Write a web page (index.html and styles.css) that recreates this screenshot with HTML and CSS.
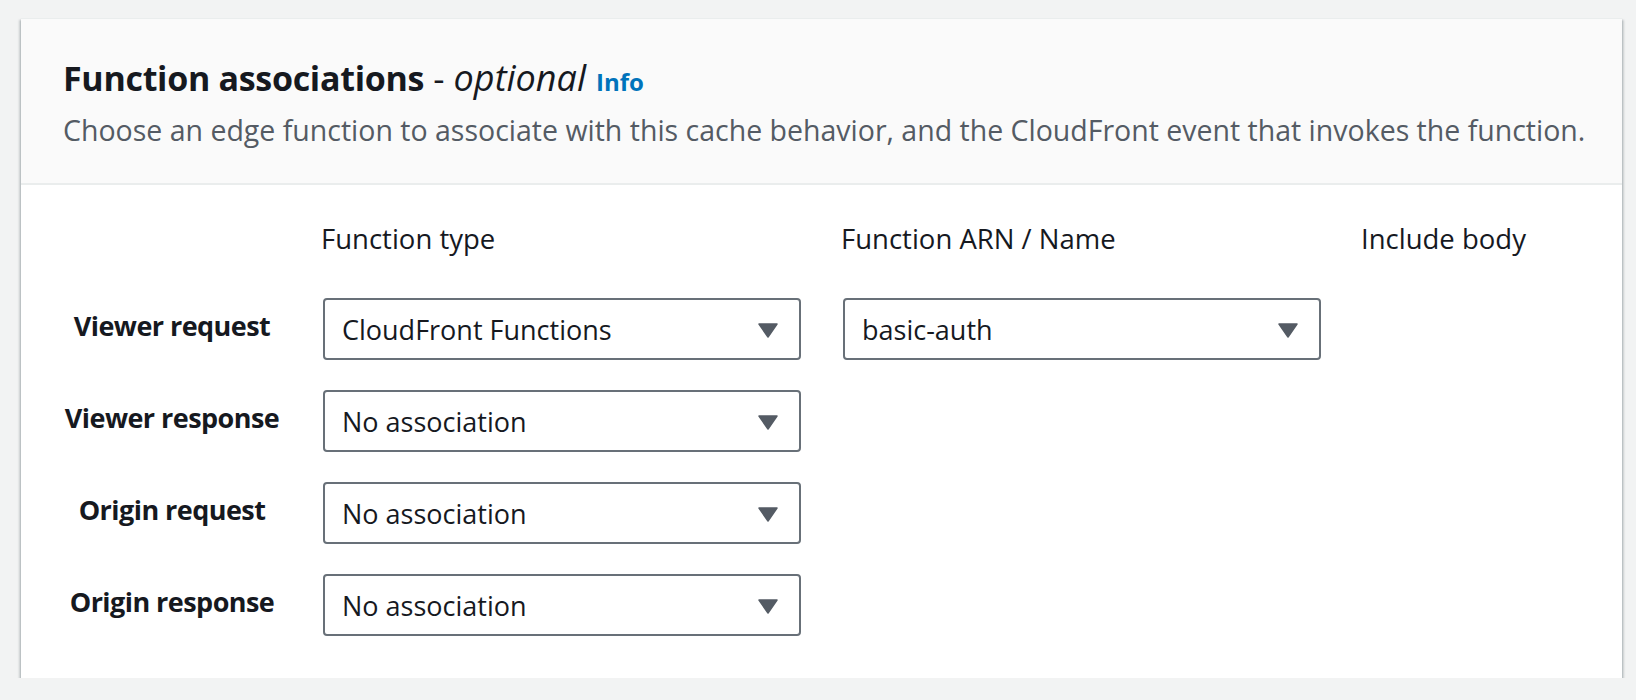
FILE: index.html
```html
<!DOCTYPE html>
<html lang="en">
<head>
<meta charset="utf-8">
<title>Function associations</title>
<link rel="stylesheet" href="styles.css">
</head>
<body>
<div class="page">
  <section class="card">
    <header class="card-header">
      <h2 class="title"><span class="title-main">Function associations</span><span class="title-opt"> - <i>optional</i></span><a class="info" href="#">Info</a></h2>
      <p class="desc">Choose an edge function to associate with this cache behavior, and the CloudFront event that invokes the function.</p>
    </header>
    <div class="card-body">
      <div class="grid">
        <div class="corner"></div>
        <div class="colhead">Function type</div>
        <div class="colhead">Function ARN / Name</div>
        <div class="colhead">Include body</div>

        <div class="rowlabel">Viewer request</div>
        <div class="select"><span>CloudFront Functions</span><svg class="caret" width="20" height="15" viewBox="0 0 20 15"><polygon points="1,1 19,1 10,14" fill="#545b64" stroke="#545b64" stroke-width="1.5" stroke-linejoin="round"/></svg></div>
        <div class="select"><span>basic-auth</span><svg class="caret" width="20" height="15" viewBox="0 0 20 15"><polygon points="1,1 19,1 10,14" fill="#545b64" stroke="#545b64" stroke-width="1.5" stroke-linejoin="round"/></svg></div>
        <div class="empty"></div>

        <div class="rowlabel">Viewer response</div>
        <div class="select"><span>No association</span><svg class="caret" width="20" height="15" viewBox="0 0 20 15"><polygon points="1,1 19,1 10,14" fill="#545b64" stroke="#545b64" stroke-width="1.5" stroke-linejoin="round"/></svg></div>
        <div class="empty"></div>
        <div class="empty"></div>

        <div class="rowlabel">Origin request</div>
        <div class="select"><span>No association</span><svg class="caret" width="20" height="15" viewBox="0 0 20 15"><polygon points="1,1 19,1 10,14" fill="#545b64" stroke="#545b64" stroke-width="1.5" stroke-linejoin="round"/></svg></div>
        <div class="empty"></div>
        <div class="empty"></div>

        <div class="rowlabel">Origin response</div>
        <div class="select"><span>No association</span><svg class="caret" width="20" height="15" viewBox="0 0 20 15"><polygon points="1,1 19,1 10,14" fill="#545b64" stroke="#545b64" stroke-width="1.5" stroke-linejoin="round"/></svg></div>
        <div class="empty"></div>
        <div class="empty"></div>
      </div>
    </div>
  </section>
</div>
</body>
</html>
```
FILE: styles.css
```css
* { box-sizing: border-box; }

html, body {
  margin: 0;
  padding: 0;
  background: #f2f3f3;
  font-family: "Open Sans", "Noto Sans", sans-serif;
  color: #16191f;
}

.page {
  padding: 18px 14px 0 21px;
}

.card {
  width: 1601px;
  height: 660px;
  background: #ffffff;
  box-shadow: 0 2px 2px 0 rgba(0, 28, 36, 0.3),
              2px 2px 2px 0 rgba(0, 28, 36, 0.15),
              -2px 2px 2px 0 rgba(0, 28, 36, 0.15);
  border-top: 1px solid #eaeded;
}

.card-header {
  background: #fafafa;
  border-bottom: 2px solid #eaeded;
  padding: 37px 20px 0 42px;
  height: 166px;
}

.title {
  margin: 0;
  font-size: 35px;
  line-height: 44px;
  font-weight: 700;
  white-space: nowrap;
}

.title-main {
  font-size: 34px;
  letter-spacing: -0.3px;
}

.title-opt {
  font-weight: 400;
}

.title-opt i {
  font-style: italic;
  font-size: 36px;
}

.info {
  margin-left: 10px;
  font-size: 24px;
  font-weight: 700;
  color: #0073bb;
  text-decoration: none;
}

.desc {
  margin: 8px 0 0 0;
  font-size: 28.5px;
  line-height: 36px;
  color: #545b64;
  white-space: nowrap;
}

.card-body {
  padding: 36px 0 0 0;
}

.grid {
  display: grid;
  grid-template-columns: 302px 520px 520px 1fr;
  row-gap: 30px;
  align-items: center;
}

.colhead {
  font-size: 27.5px;
  line-height: 36px;
  margin-bottom: 11px;
  margin-left: -2px;
  white-space: nowrap;
}

.rowlabel {
  font-size: 27px;
  line-height: 36px;
  font-weight: 700;
  letter-spacing: -0.55px;
  text-align: center;
  margin-bottom: 6px;
  white-space: nowrap;
}

.select {
  width: 478px;
  height: 62px;
  border: 2px solid #687078;
  border-radius: 4px;
  padding: 0 21px 0 17px;
  display: flex;
  align-items: center;
  justify-content: space-between;
  font-size: 27px;
  color: #16191f;
  background: #ffffff;
}

.caret {
  display: block;
  margin-top: 2px;
}
```
